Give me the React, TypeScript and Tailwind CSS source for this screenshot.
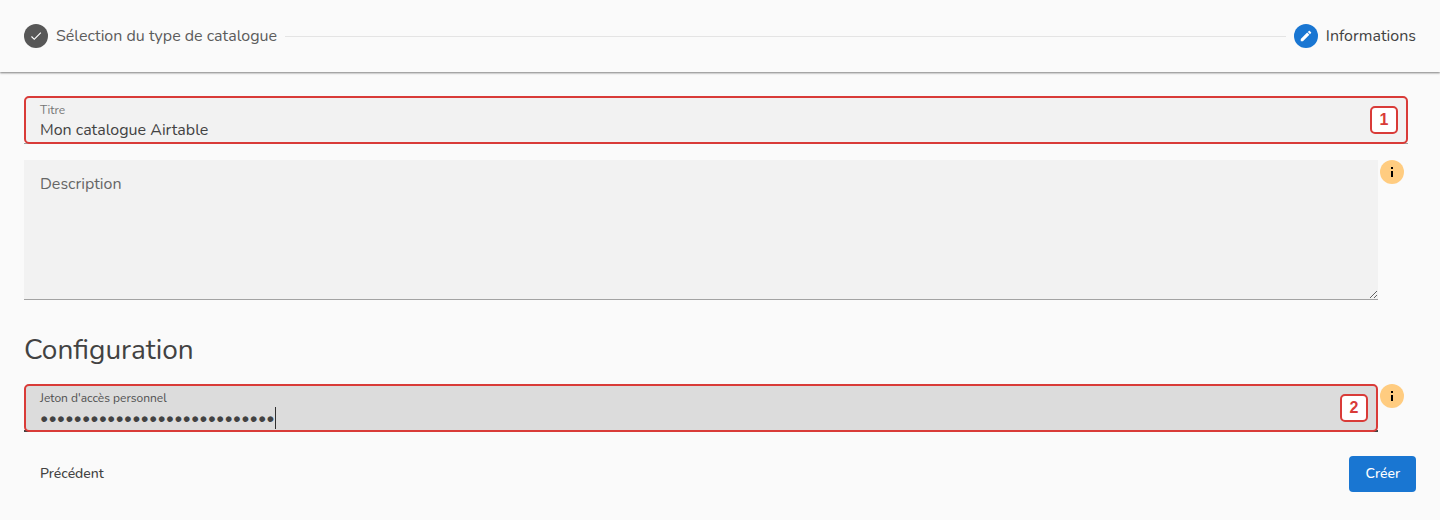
import type { ReactNode } from "react";

const fieldText = "text-base leading-6 text-[#424242]";

function Badge({ children }: { children: ReactNode }) {
  return (
    <span className="flex size-7 shrink-0 items-center justify-center rounded-[5px] border-2 border-[#d93b38] bg-white font-['Liberation_Sans',sans-serif] text-base font-bold text-[#d93b38]">
      {children}
    </span>
  );
}

function InfoButton({ label }: { label: string }) {
  return (
    <button type="button" aria-label={label} className="flex size-6 shrink-0 items-center justify-center rounded-full bg-[#ffcc80]">
      <svg viewBox="0 0 24 24" className="size-6" fill="#000">
        <rect x="11" y="7" width="2" height="2" />
        <rect x="11" y="11" width="2" height="6" />
      </svg>
    </button>
  );
}

export default function App() {
  return (
    <div className="min-h-screen bg-[#fafafa] font-['Nunito','Open_Sans',sans-serif] text-[#424242]">
      <header className="flex h-18 items-center gap-2 px-6 shadow-[0_1px_2px_rgba(0,0,0,0.5)]">
        <span className="flex size-6 shrink-0 items-center justify-center rounded-full bg-[#575757]">
          <svg viewBox="0 0 24 24" className="size-3.5" fill="#fff">
            <path d="M21,7L9,19L3.5,13.5L4.91,12.09L9,16.17L19.59,5.59L21,7Z" />
          </svg>
        </span>
        <span className="text-base text-[#5c5c5c]">Sélection du type de catalogue</span>
        <hr className="min-w-0 flex-1 border-t border-[#e4e4e4]" />
        <span className="flex size-6 shrink-0 items-center justify-center rounded-full bg-[#1976d2]">
          <svg viewBox="0 0 24 24" className="size-3.5" fill="#fff">
            <path d="M20.71,7.04C21.1,6.65 21.1,6 20.71,5.63L18.37,3.29C18,2.9 17.35,2.9 16.96,3.29L15.12,5.12L18.87,8.87M3,17.25V21H6.75L17.81,9.93L14.06,6.18L3,17.25Z" />
          </svg>
        </span>
        <span className="text-base">Informations</span>
      </header>

      <form className="flex flex-col px-6 pt-6" onSubmit={(e) => e.preventDefault()}>
        <div className="mr-2 shadow-[inset_0_-1px_0_#9e9e9e]">
          <div className="flex h-12 items-center rounded-[5px] border-2 border-[#d93b38] bg-[#f2f2f2] pr-2 pl-3.5">
            <div className="flex min-w-0 flex-1 flex-col pt-1">
              <label htmlFor="title" className="text-xs leading-4 text-[#757575]">Titre</label>
              <input id="title" defaultValue="Mon catalogue Airtable" className={`w-full bg-transparent outline-none ${fieldText}`} />
            </div>
            <Badge>1</Badge>
          </div>
        </div>

        <div className="mt-4 mr-3 flex items-start gap-0.5">
          <textarea
            aria-label="Description"
            placeholder="Description"
            className="h-35 min-w-0 flex-1 resize border-b border-[#a3a3a3] bg-[#f2f2f2] px-4 py-3 text-base leading-6 outline-none placeholder:text-[#666]"
          />
          <InfoButton label="Aide sur la description" />
        </div>

        <h2 className="mt-8 text-[28px] leading-9">Configuration</h2>

        <div className="mt-4 mr-3 flex items-start gap-0.5">
          <div className="min-w-0 flex-1 shadow-[inset_0_-2px_0_#424242]">
            <div className="flex h-12 items-center rounded-[5px] border-2 border-[#d93b38] bg-[#dcdcdc] pr-2 pl-3.5">
              <div className="flex min-w-0 flex-1 flex-col pt-1">
                <label htmlFor="token" className="text-xs leading-4 text-[#505050]">Jeton d'accès personnel</label>
                <div className="flex items-center">
                  <input id="token" type="password" defaultValue="patAbCdEfGhIjKlMnOpQrStUvWxY" className={`bg-transparent outline-none [field-sizing:content] ${fieldText}`} />
                  <span className="h-[22px] w-px bg-[#303030]" />
                </div>
              </div>
              <Badge>2</Badge>
            </div>
          </div>
          <InfoButton label="Aide sur le jeton" />
        </div>

        <div className="mt-6 flex justify-between">
          <button type="button" className="h-9 px-4 text-sm font-medium">Précédent</button>
          <button type="submit" className="h-9 rounded bg-[#1976d2] px-4 text-sm font-medium text-white">Créer</button>
        </div>
      </form>
    </div>
  );
}
